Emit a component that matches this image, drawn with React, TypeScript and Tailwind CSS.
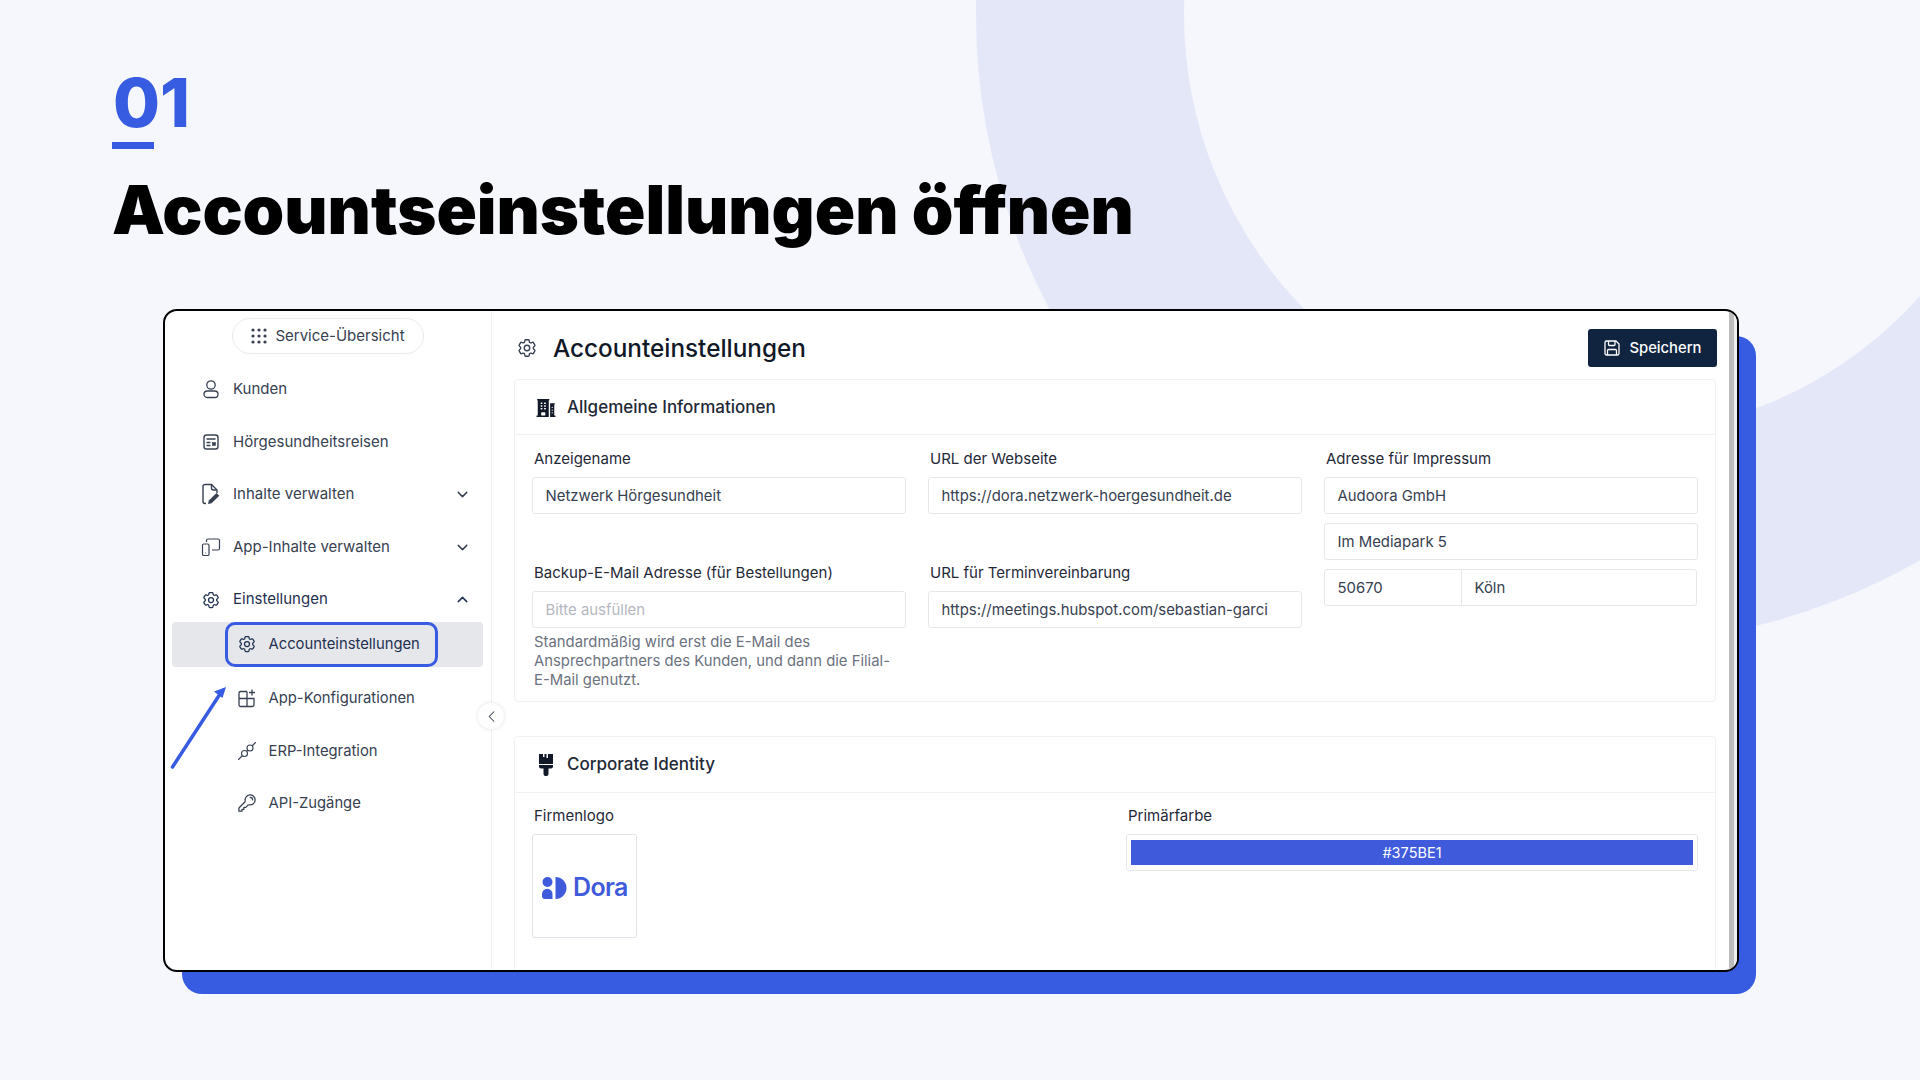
import React from 'react';
import { ChevronDown, ChevronLeft, ChevronUp } from 'lucide-react';
import { HiBuildingOffice2, HiOutlineCog6Tooth, HiOutlineKey } from 'react-icons/hi2';

const DotsIcon = () => (
  <svg width="16" height="16" viewBox="0 0 16 16" fill="#374151">
    {[2, 8, 14].map((y) => [2, 8, 14].map((x) => <circle key={`${x}-${y}`} cx={x} cy={y} r="1.6" />))}
  </svg>
);

const UserIcon = () => (
  <svg width="20" height="20" viewBox="0 0 20 20" fill="none" stroke="#374151" strokeWidth="1.3">
    <circle cx="10" cy="6" r="4.2" />
    <rect x="3" y="12" width="14" height="6.5" rx="3.25" />
  </svg>
);

const JourneyIcon = () => (
  <svg width="20" height="20" viewBox="0 0 20 20" fill="none" stroke="#374151" strokeWidth="1.4">
    <rect x="3" y="3" width="14" height="14" rx="2.5" />
    <path d="M5.5 7h9M5.5 10.5h4M5.5 13.5h4" />
    <rect x="11.5" y="10.5" width="3" height="3" fill="#374151" strokeWidth="0.6" />
  </svg>
);

const FilePenIcon = () => (
  <svg width="20" height="22" viewBox="0 0 20 22" fill="none" stroke="#374151" strokeWidth="1.4">
    <path d="M5 20.5H4a2 2 0 0 1-2-2v-15a2 2 0 0 1 2-2h6.5l5.5 5.5v3" strokeLinejoin="round" />
    <path d="M10.5 1.5V5a2 2 0 0 0 2 2H16" />
    <path d="M7 21l.8-3.6L15.5 10l2.8 2.8-7.7 7.4z" fill="#374151" stroke="none" />
  </svg>
);

const DevicesIcon = () => (
  <svg width="20" height="20" viewBox="0 0 20 20" fill="none" stroke="#374151" strokeWidth="1.2">
    <path d="M5.5 5V3.5a1.5 1.5 0 0 1 1.5-1.5h10a1.5 1.500 0 0 1 1.500 1.500v8a1.500 1.500 0 0 1-1.500 1.500h-6" />
    <rect x="1.5" y="7" width="6.5" height="11.5" rx="1.3" />
    <path d="M4.5 15.8h.5" />
  </svg>
);

const GridPlusIcon = () => (
  <svg width="20" height="20" viewBox="0 0 20 20" fill="none" stroke="#374151" strokeWidth="1.3">
    <path d="M10 3.500H3.500a1.500 1.500 0 0 0-1.500 1.500v12a1.500 1.500 0 0 0 1.500 1.500h12a1.500 1.500 0 0 0 1.500-1.500v-6.500H2M10 3.500v15" />
    <path d="M15 1.500v6M12 4.500h6" />
  </svg>
);

const PlugIcon = () => (
  <svg width="20" height="20" viewBox="0 0 20 20" fill="none" stroke="#374151" strokeWidth="1.1">
    <path d="M1.500 18.500l3.500-3.500M15.500 4.500l3-3" strokeLinecap="round" />
    <circle cx="7.500" cy="12.500" r="3" />
    <circle cx="13" cy="7" r="3" />
    <path d="M9.500 10.500l1.500-1.500" />
  </svg>
);

const BrushIcon = () => (
  <svg width="14" height="22" viewBox="0 0 14 22" fill="#111827">
    <path d="M0 0h4v3h1.500V0h2v4h1.500V0H14v10H0z" />
    <path d="M0 11h14v1.500a2 2 0 0 1-2 2H9.500V20a2 2 0 0 1-2 2h-1a2 2 0 0 1-2-2v-5.500H2a2 2 0 0 1-2-2z" />
  </svg>
);

const SaveIcon = () => (
  <svg width="18" height="18" viewBox="0 0 18 18" fill="none" stroke="currentColor" strokeWidth="1.300" strokeLinejoin="round">
    <path d="M3.500 2h9.500l3 3v9.500a1.500 1.500 0 0 1-1.500 1.500h-11A1.500 1.500 0 0 1 2 14.500v-11A1.500 1.500 0 0 1 3.500 2z" />
    <path d="M5.500 2v3.500a1 1 0 0 0 1 1h4.500a1 1 0 0 0 1-1V2" />
    <path d="M4.500 16v-4.500a1 1 0 0 1 1-1h7a1 1 0 0 1 1 1V16" />
  </svg>
);

const DoraMark = () => (
  <svg width="25" height="22" viewBox="0 0 25 22" fill="#3f5bdb">
    <circle cx="5.500" cy="5" r="5" />
    <path d="M0 17a5.200 5.200 0 0 1 10.500 0v5H3a3 3 0 0 1-3-3z" />
    <path d="M13.500 0a11 11 0 0 1 0 22z" />
  </svg>
);

const NavRow = ({ icon, label, chevron, sub }: { icon: React.ReactNode; label: string; chevron?: 'up' | 'down'; sub?: boolean }) => (
  <div className={`h-[44.6px] flex items-center pr-[19px] ${sub ? 'pl-[72px] gap-[11.500px] text-[14.800px]' : 'pl-[36px] gap-[12px] text-[15px]'} ${chevron === 'up' ? 'text-[#1f3050]' : 'text-[#374151]'}`}>
    <span className="w-[20px] flex justify-center shrink-0">{icon}</span>
    <span className="flex-1">{label}</span>
    {chevron === 'down' && <ChevronDown size={17} strokeWidth={2} className="text-[#374151]" />}
    {chevron === 'up' && <ChevronUp size={17} strokeWidth={2} className="text-[#1f3050]" />}
  </div>
);

const Field = ({ value, placeholder, className }: { value?: string; placeholder?: string; className?: string }) => (
  <input
    readOnly
    value={value ?? ''}
    placeholder={placeholder}
    className={`h-[37px] w-full min-w-0 bg-white border border-[#e5e7eb] rounded-[3px] px-[12.500px] text-[14.900px] text-[#374151] placeholder:text-[#b5b8bf] outline-none ${className ?? ''}`}
  />
);

const Label = ({ children }: { children: React.ReactNode }) => (
  <div className="h-[20px] leading-[20px] pl-[2px] pt-[1px] mb-[9px] text-[15px] text-[#1f2937]">{children}</div>
);

const CardHeader = ({ icon, title, className }: { icon: React.ReactNode; title: string; className?: string }) => (
  <div className={`flex items-center border-b border-[#f0f1f6] pt-[1px] ${className ?? ''}`}>
    <span className="w-[24px] ml-[19px] flex justify-center shrink-0">{icon}</span>
    <span className="ml-[9px] text-[17px] font-medium text-[#1f2937]">{title}</span>
  </div>
);

export default function App() {
  return (
    <div className="relative w-[1920px] h-[1080px] overflow-hidden bg-[#f6f7fc] font-[Inter,sans-serif]">
      {/* background ring */}
      <div className="absolute left-[976px] top-[-616px] w-[1260px] h-[1260px] rounded-full border-[208px] border-[#e3e7f8]" />

      <div className="relative pt-[64px]">
        <div className="pl-[112px]">
          <div className="pl-[1px] text-[68px] leading-[76px] font-extrabold text-[#375be1]">01</div>
          <div className="mt-[2px] w-[42px] h-[7px] bg-[#375be1]" />
          <h1 className="mt-[21px] text-[66.700px] leading-[80px] font-black text-black">Accountseinstellungen öffnen</h1>
        </div>

        <div className="relative mt-[59px] ml-[163px] w-[1576px] h-[663px]">
          <div className="absolute left-[19px] top-[27px] w-[1574px] h-[658px] rounded-[20px] bg-[#375be1]" />

          <div className="relative h-full flex bg-white border-2 border-black rounded-[14px] overflow-hidden">
            <aside className="relative w-[327px] shrink-0 border-r border-[#f1f2f8] pt-[7px]">
              <div className="ml-[67px] w-[192px] h-[36px] border border-[#e8e9ef] rounded-full flex items-center justify-center gap-[8px] text-[15px] text-[#374151]">
                <DotsIcon />
                <span>Service-Übersicht</span>
              </div>

              <nav className="mt-[13px] flex flex-col gap-[8px] pr-[1px]">
                <NavRow icon={<UserIcon />} label="Kunden" />
                <NavRow icon={<JourneyIcon />} label="Hörgesundheitsreisen" />
                <NavRow icon={<FilePenIcon />} label="Inhalte verwalten" chevron="down" />
                <NavRow icon={<DevicesIcon />} label="App-Inhalte verwalten" chevron="down" />
                <NavRow icon={<HiOutlineCog6Tooth size={20} className="text-[#1f3050]" />} label="Einstellungen" chevron="up" />
                <div className="-mt-[8px] mb-[1px] h-[45px] mx-[7px] bg-[#e5e7eb] rounded-[4px] pl-[53px]">
                  <div className="w-[213px] h-[45px] border-[3.500px] border-[#375be1] rounded-[10px] flex items-center gap-[11.500px] pl-[9px] text-[14.800px] text-[#1f3050]">
                    <HiOutlineCog6Tooth size={20} />
                    <span>Accounteinstellungen</span>
                  </div>
                </div>
                <NavRow sub icon={<GridPlusIcon />} label="App-Konfigurationen" />
                <NavRow sub icon={<PlugIcon />} label="ERP-Integration" />
                <NavRow sub icon={<HiOutlineKey size={20} className="text-[#374151]" />} label="API-Zugänge" />
              </nav>

              {/* annotation arrow */}
              <svg className="absolute left-[5px] top-[375px]" width="60" height="84" viewBox="0 0 60 84" fill="#375be1">
                <path d="M2.500 81L50 8" stroke="#375be1" strokeWidth="3.500" strokeLinecap="round" />
                <path d="M56 1L44 5.500l8.500 6.500z" />
              </svg>
            </aside>

            <main className="flex-1 min-w-0 pl-[22px] pr-[12px] pt-[18px] overflow-hidden">
              <div className="h-[38px] flex items-center">
                <HiOutlineCog6Tooth size={22} className="ml-[2px] text-[#374151]" />
                <span className="ml-[15px] flex-1 text-[24.300px] font-medium text-[#111827]">Accounteinstellungen</span>
                <div className="h-[38px] w-[129px] bg-[#10233f] rounded-[3px] flex items-center justify-center gap-[8px] text-[14.800px] font-medium text-white">
                  <SaveIcon />
                  <span>Speichern</span>
                </div>
              </div>

              <section className="mt-[12px] mr-[1px] border border-[#f0f1f6] rounded-[4px] h-[323px]">
                <CardHeader className="h-[55px]" icon={<HiBuildingOffice2 size={22} className="text-[#111827]" />} title="Allgemeine Informationen" />
                <div className="pt-[13px] px-[17px] grid grid-cols-3 gap-x-[22px]">
                  <div>
                    <Label>Anzeigename</Label>
                    <Field value="Netzwerk Hörgesundheit" />
                    <div className="mt-[48px]">
                      <Label>Backup-E-Mail Adresse (für Bestellungen)</Label>
                      <Field placeholder="Bitte ausfüllen" />
                    </div>
                    <p className="mt-[5px] pl-[2px] text-[14.850px] leading-[19px] text-[#6b7280]">
                      Standardmäßig wird erst die E-Mail des<br />
                      Ansprechpartners des Kunden, und dann die Filial-<br />
                      E-Mail genutzt.
                    </p>
                  </div>
                  <div>
                    <Label>URL der Webseite</Label>
                    <Field value="https://dora.netzwerk-hoergesundheit.de" />
                    <div className="mt-[48px]">
                      <Label>URL für Terminvereinbarung</Label>
                      <Field value="https://meetings.hubspot.com/sebastian-garci" />
                    </div>
                  </div>
                  <div>
                    <Label>Adresse für Impressum</Label>
                    <div className="flex flex-col gap-[9px]">
                      <Field value="Audoora GmbH" />
                      <Field value="Im Mediapark 5" />
                      <div className="grid grid-cols-[138px_1fr]">
                        <Field value="50670" className="rounded-r-none" />
                        <Field value="Köln" className="-ml-[1px] rounded-l-none" />
                      </div>
                    </div>
                  </div>
                </div>
              </section>

              <section className="mt-[34px] mr-[1px] border border-[#f0f1f6] rounded-[4px] h-[320px]">
                <CardHeader className="h-[56px]" icon={<BrushIcon />} title="Corporate Identity" />
                <div className="pt-[12px] px-[17px] grid grid-cols-[594px_1fr]">
                  <div>
                    <Label>Firmenlogo</Label>
                    <div className="w-[105px] h-[104px] border border-[#e2e3ea] rounded-[3px] flex items-center gap-[6px] pl-[9px] pt-[3px]">
                      <DoraMark />
                      <span className="text-[25px] font-semibold tracking-tight text-[#3f5bdb]">Dora</span>
                    </div>
                  </div>
                  <div>
                    <Label>Primärfarbe</Label>
                    <div className="h-[37px] border border-[#e5e7eb] rounded-[3px] px-[4px] py-[5px]">
                      <div className="h-full bg-[#3f5bdb] flex items-center justify-center text-[14.500px] text-white">#375BE1</div>
                    </div>
                  </div>
                </div>
              </section>
            </main>

            {/* scrollbar */}
            <div className="w-[8px] shrink-0 bg-[#bdbdbd] border-r-[3px] border-[#f1f1f1]" />

            <div className="absolute left-[313px] top-[392px] w-[26px] h-[26px] rounded-full bg-white shadow-[0_0_4px_rgba(0,0,0,0.12)] flex items-center justify-center">
              <ChevronLeft size={19} strokeWidth={1.300} className="text-[#374151]" />
            </div>
          </div>
        </div>
      </div>
    </div>
  );
}
